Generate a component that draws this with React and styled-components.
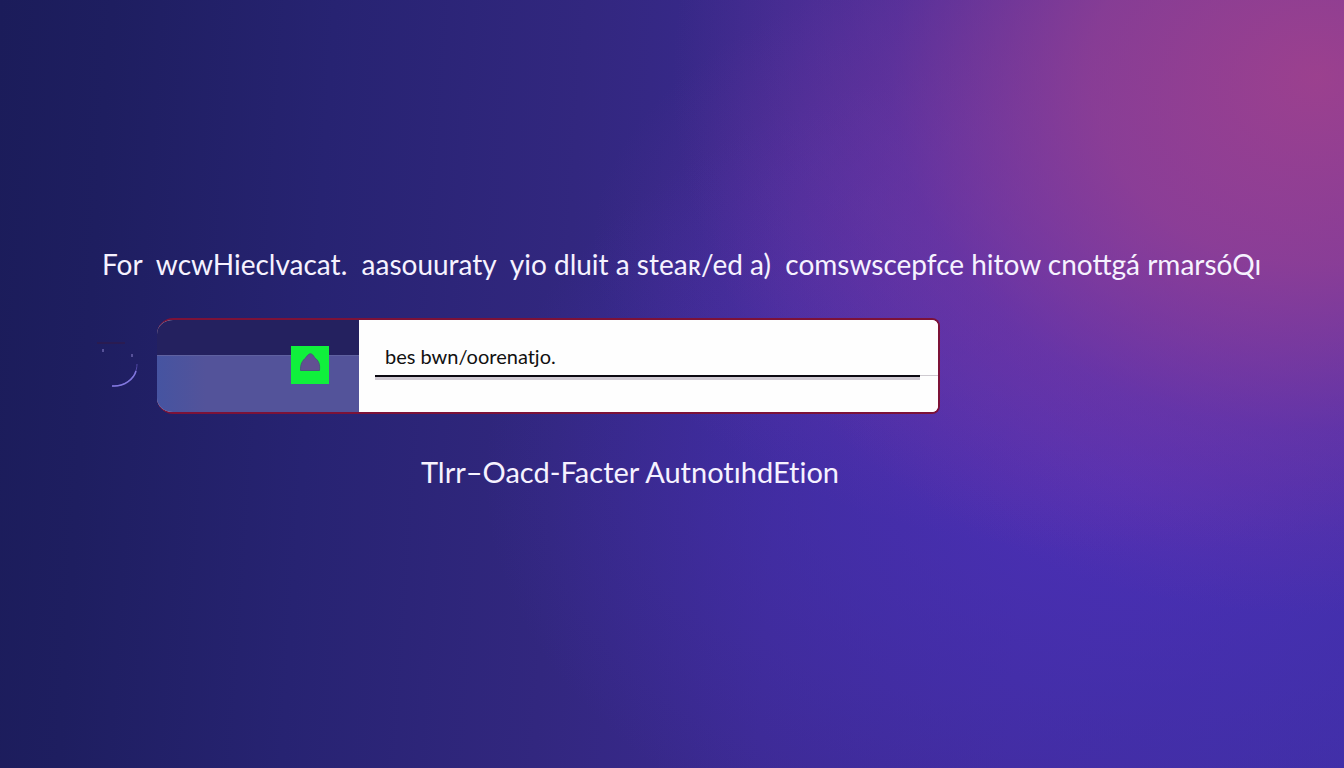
import React from "react";
import styled, { createGlobalStyle } from "styled-components";

const GlobalStyle = createGlobalStyle`
  * { box-sizing: border-box; }
  body {
    margin: 0;
    background: #1c1c5c;
    font-family: Lato, "Open Sans", sans-serif;
  }
`;

const Page = styled.main`
  min-height: 100vh;
  padding: 0 80px 32px 96px;
  display: flex;
  flex-direction: column;
  justify-content: center;
  background:
    radial-gradient(ellipse 48% 70% at 98% 10%, rgba(164, 66, 140, 0.9) 0%, rgba(150, 64, 146, 0.8) 35%, rgba(122, 56, 158, 0.42) 66%, rgba(90, 44, 160, 0) 100%),
    radial-gradient(ellipse 40% 40% at 84% 32%, rgba(120, 56, 172, 0.6) 0%, rgba(100, 48, 168, 0) 100%),
    radial-gradient(ellipse 48% 56% at 84% 62%, rgba(78, 48, 188, 0.8) 0%, rgba(72, 48, 182, 0.5) 50%, rgba(60, 44, 170, 0) 100%),
    linear-gradient(94deg, #1b1c5a 0%, #1e1e60 8%, #272372 24%, #32277f 42%, #3c2a92 58%, #402c9c 76%, #3f2fa4 100%);
`;

const Message = styled.p`
  margin: 0;
  padding-left: 6px;
  color: #f6f2ff;
  font-size: 28px;
  line-height: 36px;
  white-space: pre-wrap;
`;

const FieldRow = styled.div`
  display: flex;
  align-items: center;
  gap: 19px;
  margin: 36px 324px 40px 0;
`;

const Spinner = styled.svg`
  flex: none;
  width: 42px;
  height: 48px;
`;

const Card = styled.div`
  flex: 1;
  display: flex;
  height: 96px;
  border: 2px solid #7c1238;
  border-left-width: 0;
  border-radius: 16px 8px 8px 16px;
  background: #ffffff;
  overflow: hidden;
`;

const BadgePanel = styled.div`
  flex: 0 0 202px;
  display: flex;
  align-items: center;
  justify-content: flex-end;
  padding: 0 30px 2px 0;
  background:
    linear-gradient(90deg, rgba(64, 84, 164, 0.7) 0%, rgba(64, 84, 164, 0) 24%) 0 36px no-repeat,
    linear-gradient(180deg, #24215f 0 35px, #5f61a0 35px 36px, #53539a 36px);
`;

const Badge = styled.svg`
  display: block;
  width: 38px;
  height: 38px;
`;

const InputPanel = styled.div`
  flex: 1;
  padding: 19px 0 0 16px;
  background: #fefefe;
`;

const LineRow = styled.div`
  display: flex;
  align-items: flex-end;
`;

const CodeInput = styled.input`
  flex: 1;
  min-width: 0;
  height: 38px;
  padding: 0 10px 2px;
  border: 0;
  border-bottom: 2px solid #0c0a12;
  border-radius: 0;
  outline: 0;
  background: transparent;
  box-shadow: 0 3px 0 #cfc9d2;
  color: #111111;
  font: 20px/24px Lato, "Open Sans", sans-serif;
`;

const LineTail = styled.span`
  width: 18px;
  height: 2px;
  border-top: 1px solid #cfcbd1;
`;

const Title = styled.h1`
  margin: 0;
  padding-right: 100px;
  color: #f6f2ff;
  font-size: 29px;
  font-weight: 400;
  line-height: 36px;
  text-align: center;
  font-variant-ligatures: none;
`;

export default function App() {
  return (
    <>
      <GlobalStyle />
      <Page>
        <Message>{"For  wcwHieclvacat.  aasouuraty  yio dluit a stea\u0280/ed a)  comswscepfce hitow cnottgá rmarsóQı"}</Message>
        <FieldRow>
          <Spinner viewBox="0 0 42 48" fill="none" aria-hidden="true">
            <path d="M1 1H29" stroke="#351943" />
            <path d="M7 7v3M36 12v3" stroke="#8d83ce" />
            <path d="M16 44C28 45 41 36 41 22" stroke="#5148a5" strokeWidth="1" />
            <path d="M16 44C28 45 38 37 40 29" stroke="#8278df" strokeWidth="1.5" />
          </Spinner>
          <Card>
            <BadgePanel>
              <Badge viewBox="0 0 38 38" aria-hidden="true">
                <rect width="38" height="38" fill="#10f03c" />
                <path d="M9.500 24.500C9.500 18 11 15 15 11.500C18 6.500 21 6.500 23.500 11.500C28 15 29 18 28.500 24.500Z" fill="#625092" stroke="#4b567d" />
              </Badge>
            </BadgePanel>
            <InputPanel>
              <LineRow>
                <CodeInput type="text" aria-label="Code" defaultValue="bes bwn/oorenatjo." />
                <LineTail />
              </LineRow>
            </InputPanel>
          </Card>
        </FieldRow>
        <Title>Tlrr–Oacd-Facter AutnotıhdEtion</Title>
      </Page>
    </>
  );
}
